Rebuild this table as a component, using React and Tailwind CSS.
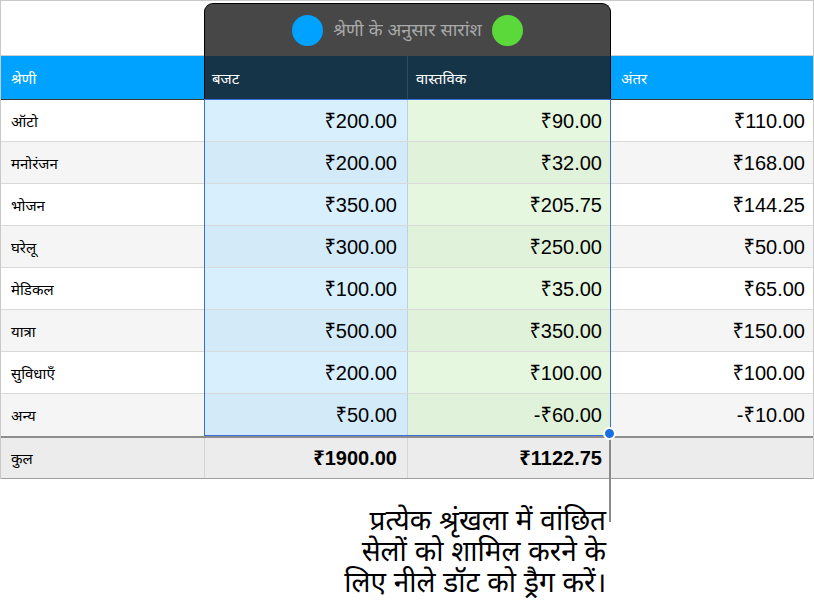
import React from "react";

const rows = [
  ["ऑटो", "₹200.00", "₹90.00", "₹110.00"],
  ["मनोरंजन", "₹200.00", "₹32.00", "₹168.00"],
  ["भोजन", "₹350.00", "₹205.75", "₹144.25"],
  ["घरेलू", "₹300.00", "₹250.00", "₹50.00"],
  ["मेडिकल", "₹100.00", "₹35.00", "₹65.00"],
  ["यात्रा", "₹500.00", "₹350.00", "₹150.00"],
  ["सुविधाएँ", "₹200.00", "₹100.00", "₹100.00"],
  ["अन्य", "₹50.00", "-₹60.00", "-₹10.00"],
];

const font = { fontFamily: '"Liberation Sans", "Noto Sans", "Noto Sans Devanagari", sans-serif' };

export default function App() {
  return (
    <div className="relative w-[814px] h-[612px] bg-white text-black overflow-hidden" style={font}>
      <div className="border-t border-l border-r border-[#c9c9c9]">
        {/* title + header */}
        <div className="flex">
          <div className="w-[203px] flex flex-col">
            <div className="h-[55px] border-b border-[#cfcfcf]" />
            <div className="h-[43px] bg-[#00a2ff] text-white text-[15px] flex items-center pt-[4px] px-[10px]">श्रेणी</div>
          </div>
          <div className="w-[407px] mt-[2px] rounded-t-[9px] bg-[#474747] border border-black border-b-0 overflow-hidden flex flex-col">
            <div className="h-[52px] flex items-center justify-center gap-[10px]">
              <span className="w-[31px] h-[31px] rounded-full bg-[#00a2ff]" />
              <span className="text-[#a9a9a9] text-[18px]">श्रेणी के अनुसार सारांश</span>
              <span className="w-[31px] h-[31px] rounded-full bg-[#5cd93a]" />
            </div>
            <div className="h-[43px] bg-[#163448] text-white text-[15px] flex">
              <div className="w-[203px] flex items-center pt-[4px] px-[7px] border-r border-[#2d495c]">बजट</div>
              <div className="flex-1 flex items-center pt-[4px] px-[8px]">वास्तविक</div>
            </div>
          </div>
          <div className="flex-1 flex flex-col">
            <div className="h-[55px] border-b border-[#cfcfcf]" />
            <div className="h-[43px] bg-[#00a2ff] text-white text-[15px] flex items-center pt-[4px] px-[10px]">अंतर</div>
          </div>
        </div>
        <div className="h-[1px] bg-[#3a3a3a]" />

        {/* body */}
        {rows.map((r, i) => {
          const alt = i % 2 === 1;
          return (
            <div key={i} className={`h-[42px] grid grid-cols-[204px_203px_203px_1fr] text-[20px] ${i < rows.length - 1 ? "border-b border-[#d9d9d9]" : ""}`}>
              <div className={`flex items-center pt-[3px] px-[10px] text-[15px] ${alt ? "bg-[#f5f5f5]" : "bg-white"}`}>{r[0]}</div>
              <div className={`flex items-center justify-end pr-[10px] border-r border-[#b9d3e3] ${alt ? "bg-[#d3eaf9]" : "bg-[#d8effd]"}`}>{r[1]}</div>
              <div className={`flex items-center justify-end pr-[9px] ${alt ? "bg-[#e0f3da]" : "bg-[#e5f7df]"}`}>{r[2]}</div>
              <div className={`flex items-center justify-end pr-[8px] ${alt ? "bg-[#f5f5f5]" : "bg-white"}`}>{r[3]}</div>
            </div>
          );
        })}

        {/* footer */}
        <div className="h-[2px] bg-[#8e8e8e]" />
        <div className="h-[41px] grid grid-cols-[204px_203px_203px_1fr] bg-[#ececec] text-[20px] border-b border-[#a0a0a0]">
          <div className="flex items-center pt-[3px] px-[10px] text-[15px] border-r border-[#d4d4d4]">कुल</div>
          <div className="flex items-center justify-end pr-[10px] font-bold border-r border-[#d4d4d4]">₹1900.00</div>
          <div className="flex items-center justify-end pr-[9px] font-bold">₹1122.75</div>
          <div />
        </div>
      </div>

      {/* selection outline */}
      <div className="absolute left-[204px] top-[99px] w-[407px] h-[337px] border border-[#3b6fd8] pointer-events-none" />
      {/* callout line */}
      <div className="absolute left-[609px] top-[433px] w-[2px] h-[89px] bg-[#8a8a8a]" />
      {/* handle */}
      <div className="absolute left-[603px] top-[427px] w-[13px] h-[13px] rounded-full bg-[#1a6fe0] border-2 border-white" />

      {/* callout text */}
      <div className="pr-[208px] pt-[26px] flex justify-end">
        <p className="text-right text-[28px] leading-[31px]">
          प्रत्येक श्रृंखला में वांछित
          <br />
          सेलों को शामिल करने के
          <br />
          लिए नीले डॉट को ड्रैग करें।
        </p>
      </div>
    </div>
  );
}
